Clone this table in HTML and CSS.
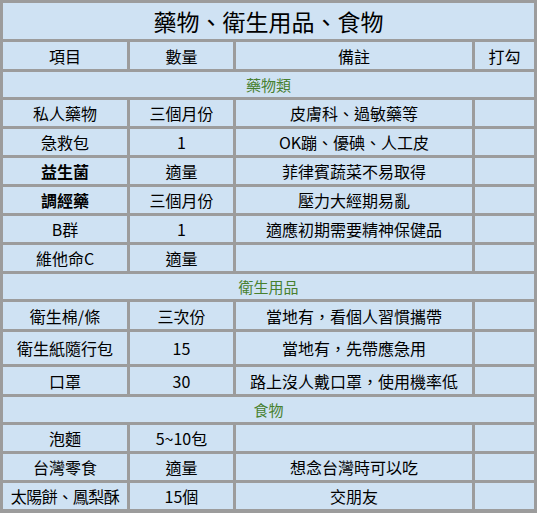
FILE: index.html
```html
<!DOCTYPE html>
<html lang="zh-Hant">
<head>
<meta charset="utf-8">
<title>藥物、衛生用品、食物</title>
<link rel="stylesheet" href="styles.css">
</head>
<body>
<table class="sheet">
  <colgroup>
    <col class="c-item">
    <col class="c-qty">
    <col class="c-note">
    <col class="c-check">
  </colgroup>
  <tr class="r-title"><td colspan="4" class="title">藥物、衛生用品、食物</td></tr>
  <tr class="r-head"><td>項目</td><td>數量</td><td>備註</td><td>打勾</td></tr>
  <tr class="r-sec"><td colspan="4" class="sec">藥物類</td></tr>
  <tr class="r"><td>私人藥物</td><td>三個月份</td><td>皮膚科、過敏藥等</td><td></td></tr>
  <tr class="r"><td>急救包</td><td>1</td><td>OK蹦、優碘、人工皮</td><td></td></tr>
  <tr class="r"><td class="b">益生菌</td><td>適量</td><td>菲律賓蔬菜不易取得</td><td></td></tr>
  <tr class="r"><td class="b">調經藥</td><td>三個月份</td><td>壓力大經期易亂</td><td></td></tr>
  <tr class="r"><td>B群</td><td>1</td><td>適應初期需要精神保健品</td><td></td></tr>
  <tr class="r"><td>維他命C</td><td>適量</td><td></td><td></td></tr>
  <tr class="r-sec"><td colspan="4" class="sec">衛生用品</td></tr>
  <tr class="r r27"><td>衛生棉/條</td><td>三次份</td><td>當地有，看個人習慣攜帶</td><td></td></tr>
  <tr class="r r32"><td>衛生紙隨行包</td><td>15</td><td>當地有，先帶應急用</td><td></td></tr>
  <tr class="r r27"><td>口罩</td><td>30</td><td>路上沒人戴口罩，使用機率低</td><td></td></tr>
  <tr class="r-sec"><td colspan="4" class="sec">食物</td></tr>
  <tr class="r"><td>泡麵</td><td>5~10包</td><td></td><td></td></tr>
  <tr class="r"><td>台灣零食</td><td>適量</td><td>想念台灣時可以吃</td><td></td></tr>
  <tr class="r"><td class="tight">太陽餅、鳳梨酥</td><td>15個</td><td>交朋友</td><td></td></tr>
</table>
</body>
</html>
```

FILE: styles.css
```css
html, body {
  margin: 0;
  padding: 0;
  background: #9c9c9c;
}

.sheet {
  width: 537px;
  table-layout: fixed;
  border-collapse: separate;
  border-spacing: 3px;
  background: #9c9c9c;
  font-family: "Noto Sans CJK TC", "Noto Sans", sans-serif;
  font-size: 16px;
  color: #000;
}

.c-item { width: 124px; }
.c-qty { width: 103px; }
.c-note { width: 236px; }
.c-check { width: 59px; }

.sheet td {
  background: #cfe2f3;
  text-align: center;
  vertical-align: middle;
  padding: 0;
  line-height: 20px;
  white-space: nowrap;
  overflow: hidden;
}

.r-title td { height: 36px; }
.title {
  font-size: 23px;
  line-height: 28px;
}

.r-head td { height: 27px; }
.r-sec td { height: 25px; }
.r td { height: 26px; }
.r27 td { height: 27px; }
.r32 td { height: 32px; }

.sec {
  color: #47802f;
  font-size: 15px;
}

.b { font-weight: bold; }

.tight { letter-spacing: -0.5px; }
```
